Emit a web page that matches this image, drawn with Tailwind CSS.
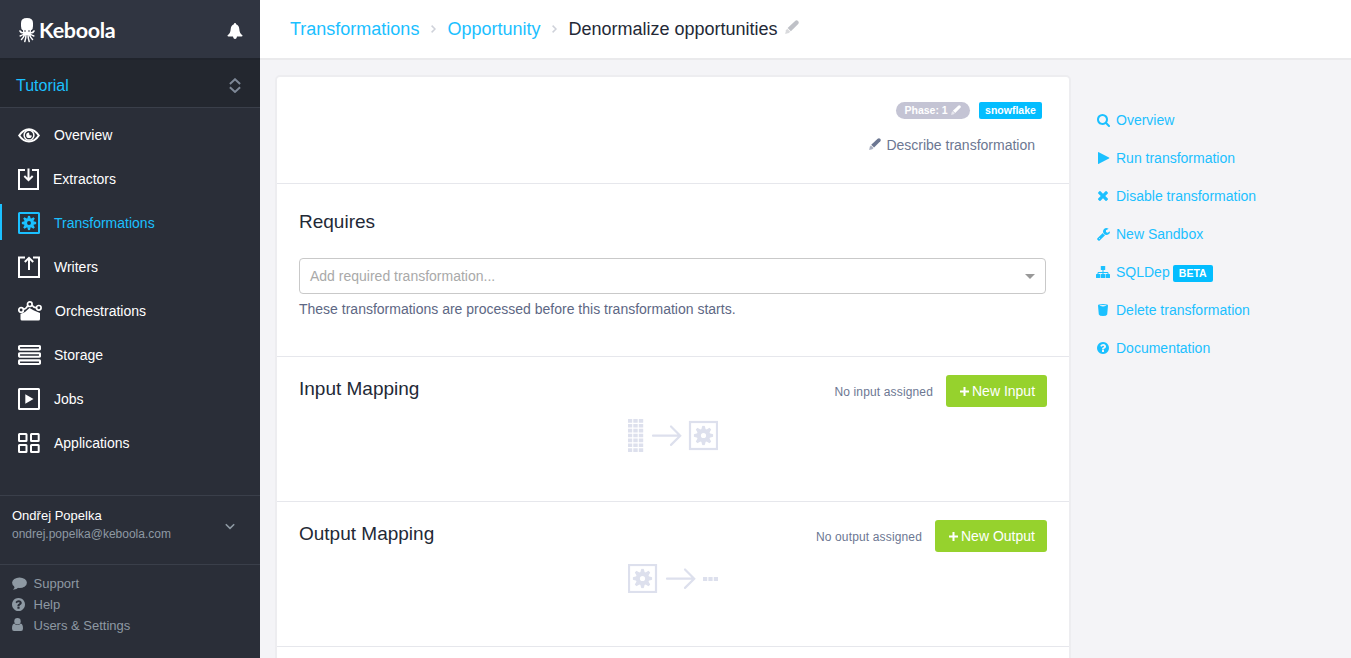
<!DOCTYPE html>
<html lang="en">
<head>
<meta charset="utf-8">
<title>Keboola - Denormalize opportunities</title>
<script src="https://cdn.jsdelivr.net/npm/@tailwindcss/browser@4"></script>
</head>
<body class="flex h-[658px] overflow-hidden bg-[#f4f4f7] font-['Liberation_Sans',Arial,sans-serif] text-sm text-[#5d6784]">

<svg class="hidden">
  <symbol id="gear" viewBox="-10 -10 20 20">
    <circle r="4.7" fill="none" stroke="currentColor" stroke-width="4.2"/>
    <g fill="currentColor">
      <path id="tooth" d="M-2.2-6L-1.2-9.7H1.2L2.2-6Z"/>
      <use href="#tooth" transform="rotate(45)"/><use href="#tooth" transform="rotate(90)"/>
      <use href="#tooth" transform="rotate(135)"/><use href="#tooth" transform="rotate(180)"/>
      <use href="#tooth" transform="rotate(225)"/><use href="#tooth" transform="rotate(270)"/>
      <use href="#tooth" transform="rotate(315)"/>
    </g>
  </symbol>
  <symbol id="pencil" viewBox="0 0 14 14">
    <path fill="currentColor" d="M10.1.9Q11.600-.5 13 .9T13.200 3.900L5.900 11.200 2.600 8Z"/>
    <path fill="currentColor" opacity=".6" d="M2.200 8.700L5.300 11.700 3.800 13 .2 13.900 1 10.200Z"/>
  </symbol>
  <symbol id="help" viewBox="128 128 1536 1536">
    <path fill="currentColor" d="M1024 1376v-192q0-14-9-23t-23-9h-192q-14 0-23 9t-9 23v192q0 14 9 23t23 9h192q14 0 23-9t9-23zm256-672q0-88-55.500-163t-138.500-116-170-41q-243 0-371 213-15 24 8 42l132 100q7 6 19 6 16 0 25-12 53-68 86-92 34-24 86-24 48 0 85.500 26t37.500 59q0 38-20 61t-68 45q-63 28-115.500 86.500t-52.500 125.500v36q0 14 9 23t23 9h192q14 0 23-9t9-23q0-19 21.500-49.500t54.500-49.500q32-18 49-28.500t46-35 44.500-48 28-60.500 12.500-81zm384 192q0 209-103 385.500t-279.500 279.500-385.500 103-385.500-103-279.500-279.500-103-385.500 103-385.500 279.500-279.500 385.500-103 385.500 103 279.500 279.500 103 385.500z"/>
  </symbol>
</svg>

<aside class="flex w-[260px] shrink-0 flex-col bg-[#2a2e38]">
  <div class="flex h-[60px] items-center border-b-2 border-[#20242c] bg-[#303541] pl-[19px] pr-[17px] pt-[3px] text-white">
    <svg class="h-[25px] w-[16px]" viewBox="0 0 16 25">
      <path fill="#fff" d="M2 5Q2 0 8 0T14 5V8Q14 11 12.500 12H3.500Q2 11 2 8Z"/>
      <path fill="#fff" d="M3.800 11H12.200L11.500 17H4.500Z"/>
      <circle cx="6" cy="13" r=".8" fill="#303541"/><circle cx="10" cy="13" r=".8" fill="#303541"/>
      <g fill="none" stroke="#fff" stroke-width="1.500" stroke-linecap="round">
        <path d="M4.800 14.500Q2.500 15.500 1 13M11.200 14.500Q13.500 15.500 15 13M5 16Q3.500 17 1.200 18M11 16Q12.500 17 14.800 18M5.500 16.500Q5 19 2.500 21.500M10.500 16.500Q11 19 13.500 21.500M7 16.500Q7 20 5.800 23.500M9 16.500Q9 20 10.200 23.500"/>
      </g>
    </svg>
    <span class="ml-[4px] font-['Lato',sans-serif] text-[21.500px] leading-none font-bold tracking-[-0.300px]">Keboola</span>
    <svg class="ml-auto h-[16px] w-[16px]" viewBox="0 0 16 16" fill="#fff">
      <path d="M8 0Q9.100 0 9.100 1.300Q12 2.200 12.300 6Q12.500 10.500 15.600 12.500Q15.400 13.500 14.500 13.500H1.500Q.6 13.500 .4 12.500Q3.500 10.500 3.700 6Q4 2.200 6.900 1.300Q6.900 0 8 0Z"/><path d="M6 13H10Q9.800 16 8 16T6 13Z"/>
    </svg>
  </div>
  <div class="flex h-[48px] items-center border-b border-[#3a3f4a] bg-[#23272f] pl-[16px] pr-[19px] pt-[4px] text-base text-[#1bc0ff]">
    Tutorial
    <svg class="ml-auto h-[15px] w-[12px]" viewBox="0 0 12 15" fill="none" stroke="#7e8897" stroke-width="1.900"><path d="M.9 6L6 1.200 11.100 6M.9 9.200L6 14 11.100 9.200"/></svg>
  </div>

  <nav class="flex h-[388px] flex-col border-b border-[#3a3f4a] pt-[5px] text-white">
    <a class="flex h-[44px] items-center pl-[18px]">
      <svg class="h-[22px] w-[22px]" viewBox="0 0 22 22" fill="none" stroke="currentColor" stroke-width="2"><path d="M1.200 11.500C4 7.200 7 5.200 11 5.200S18 7.200 20.800 11.500C18 15.700 15 17.500 11 17.500S4 15.700 1.200 11.500Z"/><circle cx="11" cy="11.200" r="4.900" stroke-width="1.500"/><path d="M11 8.500A2.800 2.800 0 1 0 13.800 11.500L11.500 11.300Z" fill="currentColor" stroke="none"/></svg>
      <span class="ml-[14px]">Overview</span>
    </a>
    <a class="flex h-[44px] items-center pl-[18px]">
      <svg class="h-[22px] w-[21px]" viewBox="0 0 21 22" fill="none" stroke="currentColor" stroke-width="2"><path d="M7 2H1V21H20V2H14"/><path d="M10.500 .5V12M6.300 8L10.500 12.200 14.700 8"/></svg>
      <span class="ml-[14px]">Extractors</span>
    </a>
    <a class="flex h-[44px] items-center text-[#1bc0ff]">
      <span class="mb-[2px] mr-[16px] h-[36px] w-[2px] bg-[#1bc0ff]"></span>
      <svg class="h-[22px] w-[22px]" viewBox="0 0 22 22"><rect x="1" y="1" width="20" height="20" rx=".5" fill="none" stroke="currentColor" stroke-width="2"/><use href="#gear" x="3.500" y="3.500" width="15" height="15"/></svg>
      <span class="ml-[14px]">Transformations</span>
    </a>
    <a class="flex h-[44px] items-center pl-[18px]">
      <svg class="h-[22px] w-[22px]" viewBox="0 0 22 22" fill="none" stroke="currentColor" stroke-width="2"><path d="M7 1.500H1V21H21V1.500H15"/><path d="M11 14V2M6.800 6L11 1.800 15.200 6"/></svg>
      <span class="ml-[14px]">Writers</span>
    </a>
    <a class="flex h-[44px] items-center pl-[18px]">
      <svg class="h-[22px] w-[24px]" viewBox="0 0 24 22"><path fill="currentColor" d="M2.500 14L7 12 11.500 8 16 10.500 22 13V19Q22 20.500 20.500 20.500H4Q2.500 20.500 2.500 19Z"/><g fill="none" stroke="currentColor" stroke-width="1.700"><path d="M5.400 9.200Q8 9 9.700 5.800M14 5.200Q16 8 18.500 7.600"/><g fill="#2a2e38"><circle cx="3.100" cy="10" r="2.300"/><circle cx="11.800" cy="4.200" r="2.300"/><circle cx="20.800" cy="7.800" r="2.300"/></g></g></svg>
      <span class="ml-[13px]">Orchestrations</span>
    </a>
    <a class="flex h-[44px] items-center pl-[18px]">
      <svg class="h-[22px] w-[23px]" viewBox="0 0 23 22" fill="none" stroke="currentColor" stroke-width="2.100"><rect x="1" y="2" width="21" height="3.600" rx="1"/><rect x="1" y="9.200" width="21" height="3.600" rx="1"/><rect x="1" y="16.400" width="21" height="3.600" rx="1"/></svg>
      <span class="ml-[13px]">Storage</span>
    </a>
    <a class="flex h-[44px] items-center pl-[18px]">
      <svg class="h-[22px] w-[22px]" viewBox="0 0 22 22"><rect x="1" y="1" width="20" height="20" rx=".5" fill="none" stroke="currentColor" stroke-width="2"/><path fill="currentColor" d="M7.300 6.300L15.500 11 7.300 15.700Z"/></svg>
      <span class="ml-[14px]">Jobs</span>
    </a>
    <a class="flex h-[44px] items-center pl-[18px]">
      <svg class="h-[22px] w-[22px]" viewBox="0 0 22 22" fill="none" stroke="currentColor" stroke-width="2"><rect x="1" y="2" width="7.500" height="7" rx=".5"/><rect x="13" y="2" width="7.700" height="7" rx=".5"/><rect x="1" y="13" width="7.500" height="7" rx=".5"/><rect x="13" y="13" width="7.700" height="7" rx=".5"/></svg>
      <span class="ml-[14px]">Applications</span>
    </a>
  </nav>

  <div class="flex h-[69px] justify-between border-b border-[#3a3f4a] pl-[12px] pr-[25px] pt-[10px]">
    <div>
      <div class="text-[13px] leading-[19px] text-white">Ondřej Popelka</div>
      <div class="text-xs leading-[18px] text-[#8e99a3]">ondrej.popelka@keboola.com</div>
    </div>
    <svg class="mt-[17px] h-[7px] w-[10px]" viewBox="0 0 10 7" fill="none" stroke="#8e99a3" stroke-width="1.600"><path d="M.8 1.200L5 5.400 9.200 1.200"/></svg>
  </div>
  <div class="flex flex-col pl-[12px] pt-[8px] text-[13px] leading-[21px] text-[#8e99a3]">
    <a class="flex items-center"><svg class="mr-[6.500px] h-[13px] w-[15px]" viewBox="0 0 15 13" fill="currentColor"><ellipse cx="7.500" cy="5.800" rx="7.400" ry="5.300"/><path d="M2.500 8Q3 11.500 1 12.800Q5 12.500 6.500 10.500Z"/></svg>Support</a>
    <a class="flex items-center"><svg class="mb-px mr-[8.500px] h-[13px] w-[13px]"><use href="#help"/></svg>Help</a>
    <a class="flex items-center"><svg class="mb-[2px] mr-[10.500px] h-[13px] w-[11px]" viewBox="0 0 11 13" fill="currentColor"><circle cx="5.500" cy="3.200" r="3.200"/><path d="M2.300 5.500Q5.500 8.500 8.700 5.500Q11 6 11 10.500Q11 13 9 13H2Q0 13 0 10.500Q0 6 2.300 5.500Z"/></svg>Users &amp; Settings</a>
  </div>
</aside>

<div class="flex min-w-0 flex-1 flex-col">
  <header class="flex h-[60px] shrink-0 items-center border-b-2 border-[#eaeaec] bg-white pl-[30px] text-lg leading-[58px] text-[#1bc0ff]">
    <a>Transformations</a>
    <svg class="mx-[11.500px] h-[8px] w-[5px]" viewBox="0 0 5 8" fill="none" stroke="#cfd2da" stroke-width="1.500"><path d="M.6 .6L4 4 .6 7.400"/></svg>
    <a>Opportunity</a>
    <svg class="ml-[12px] mr-[11px] h-[8px] w-[5px]" viewBox="0 0 5 8" fill="none" stroke="#cfd2da" stroke-width="1.500"><path d="M.6 .6L4 4 .6 7.400"/></svg>
    <span class="text-[#232936]">Denormalize opportunities</span>
    <svg class="mb-[4px] ml-[7px] h-[14px] w-[14px] text-[#bfc1c7]"><use href="#pencil"/></svg>
  </header>

  <div class="flex h-[598px] overflow-hidden">
    <main class="ml-[15px] mt-[15px] h-[620px] w-[796px] shrink-0 rounded-[5px] border-2 border-[#ededf0] bg-white">
      <section class="flex h-[107px] flex-col items-end border-b border-[#e6e7ec] pr-[27px] pt-[25px]">
        <div class="flex gap-[9px] text-[10.500px] leading-[17px] font-bold text-white">
          <span class="flex h-[17px] w-[74px] items-center rounded-full bg-[#c4c4d4] pl-[8.500px]">Phase: 1<svg class="mb-[2px] ml-[3.500px] h-[10px] w-[10px]"><use href="#pencil"/></svg></span>
          <span class="h-[17px] w-[63px] rounded-[2px] bg-[#03bdff] text-center">snowflake</span>
        </div>
        <a class="mr-[7px] mt-[16px] flex items-center leading-5 text-[#6c7792]"><svg class="mb-[3px] mr-[5px] h-[12px] w-[12px]"><use href="#pencil"/></svg>Describe transformation</a>
      </section>

      <section class="h-[173px] border-b border-[#e6e7ec] px-[22px] pt-[25px]">
        <h2 class="text-[19px] leading-[26px] text-[#232936]">Requires</h2>
        <div class="mt-[23px] flex h-[36px] w-[747px] items-center justify-between rounded border border-[#c9c9c9] pl-[10px] pr-[10px] text-[#a9a9a9]">
          <span>Add required transformation...</span>
          <svg class="h-[5px] w-[10px]" viewBox="0 0 10 5"><path fill="#999" d="M0 0H10L5 5Z"/></svg>
        </div>
        <p class="mt-[5px] leading-5">These transformations are processed before this transformation starts.</p>
      </section>

      <section class="flex h-[145px] flex-col items-center border-b border-[#e6e7ec] px-[22px] pt-[18px]">
        <div class="flex h-[32px] w-full items-center">
          <h2 class="mb-[5px] mr-auto text-[19px] leading-[26px] text-[#232936]">Input Mapping</h2>
          <span class="mr-[13px] mt-px text-xs tracking-[0.150px] text-[#6c7792]">No input assigned</span>
          <button class="flex h-[32px] w-[101px] items-center rounded-[3px] bg-[#96d22d] pl-[14px] text-white"><svg class="mr-[3px] h-[9px] w-[9px]" viewBox="0 0 9 9"><path d="M4.500 0V9M0 4.500H9" stroke="#fff" stroke-width="2"/></svg>New Input</button>
        </div>
        <svg class="mt-[12px] h-[33px] w-[90px] text-[#dde0ed]" viewBox="0 0 90 33">
          <path d="M2 0V33M7.500 0V33M13 0V33" stroke="currentColor" stroke-width="4.400" stroke-dasharray="3.700 1.180"/>
          <path d="M25 16.700H52M43 7.500L52.200 16.700 43 25.900" fill="none" stroke="currentColor" stroke-width="2.200" stroke-linecap="round"/>
          <rect x="62" y="3" width="27" height="27" fill="none" stroke="currentColor" stroke-width="2.200"/>
          <use href="#gear" x="65.500" y="6.500" width="20" height="20"/>
        </svg>
      </section>

      <section class="flex h-[145px] flex-col items-center border-b border-[#e6e7ec] px-[22px] pt-[18px]">
        <div class="flex h-[32px] w-full items-center">
          <h2 class="mb-[5px] mr-auto text-[19px] leading-[26px] text-[#232936]">Output Mapping</h2>
          <span class="mr-[13px] mt-px text-xs tracking-[0.150px] text-[#6c7792]">No output assigned</span>
          <button class="flex h-[32px] w-[112px] items-center rounded-[3px] bg-[#96d22d] pl-[14px] text-white"><svg class="mr-[3px] h-[9px] w-[9px]" viewBox="0 0 9 9"><path d="M4.500 0V9M0 4.500H9" stroke="#fff" stroke-width="2"/></svg>New Output</button>
        </div>
        <svg class="mt-[12px] h-[29px] w-[90px] text-[#dde0ed]" viewBox="0 0 90 29">
          <rect x="1" y="1" width="27" height="27" fill="none" stroke="currentColor" stroke-width="2.200"/>
          <use href="#gear" x="4.500" y="4.500" width="20" height="20"/>
          <path d="M39 14.700H66M57 5.500L66.200 14.700 57 23.900" fill="none" stroke="currentColor" stroke-width="2.200" stroke-linecap="round"/>
          <path d="M75 15H90" stroke="currentColor" stroke-width="4" stroke-dasharray="4.200 1.200"/>
        </svg>
      </section>
    </main>

    <aside class="ml-[25px] flex flex-col pt-[41px] text-[#1bc0ff]">
      <a class="flex h-[38px] items-center"><span class="flex w-[20px] shrink-0 pl-[.5px]"><svg class="h-[13px] w-[13px]" viewBox="64 128 1664 1664"><path fill="currentColor" d="M1216 832q0-185-131.500-316.500t-316.500-131.500-316.500 131.500-131.500 316.500 131.500 316.500 316.500 131.500 316.500-131.500 131.500-316.500zm512 832q0 52-38 90t-90 38q-54 0-90-38l-343-342q-179 124-399 124-143 0-273.500-55.500t-225-150-150-225-55.500-273.500 55.500-273.500 150-225 225-150 273.500-55.500 273.500 55.500 225 150 150 225 55.500 273.500q0 220-124 399l343 343q37 37 37 90z"/></svg></span>Overview</a>
      <a class="flex h-[38px] items-center"><span class="flex w-[20px] shrink-0 pl-[1.500px]"><svg class="h-[12px] w-[12px]" viewBox="0 0 12 12"><path fill="currentColor" d="M0 .6Q0-.2 .8 .2L11 5.600Q11.600 6 11 6.400L.8 11.800Q0 12.200 0 11.400Z"/></svg></span>Run transformation</a>
      <a class="flex h-[38px] items-center"><span class="flex w-[20px] shrink-0 pl-[2px]"><svg class="h-[10px] w-[10px]" viewBox="302 444 1188 1188"><path transform="translate(0 84)" fill="currentColor" d="M1490 1322q0 40-28 68l-136 136q-28 28-68 28t-68-28l-294-294-294 294q-28 28-68 28t-68-28l-136-136q-28-28-28-68t28-68l294-294-294-294q-28-28-28-68t28-68l136-136q28-28 68-28t68 28l294 294 294-294q28-28 68-28t68 28l136 136q28 28 28 68t-28 68l-294 294 294 294q28 28 28 68z"/></svg></span>Disable transformation</a>
      <a class="flex h-[38px] items-center"><span class="flex w-[20px] shrink-0 pl-[.5px]"><svg class="h-[13px] w-[13px]" viewBox="64 128 1664 1664"><path fill="currentColor" d="M448 1472q0-26-19-45t-45-19-45 19-19 45 19 45 45 19 45-19 19-45zm644-420l-682 682q-37 37-90 37-52 0-91-37l-106-108q-38-36-38-90 0-53 38-91l681-681q39 98 114.500 173.500t173.500 114.500zm634-435q0 39-23 106-47 134-164.500 217.500t-258.500 83.500q-185 0-316.500-131.500t-131.500-316.500 131.500-316.500 316.500-131.500q58 0 121.500 16.500t107.500 46.500q16 11 16 28t-16 28l-293 169v224l193 107q5-3 79-48.500t135.500-81 70.500-35.500q15 0 23.500 10t8.500 25z"/></svg></span>New Sandbox</a>
      <a class="flex h-[38px] items-center"><span class="flex w-[20px] shrink-0"><svg class="h-[12px] w-[14px]" viewBox="0 0 14 12"><g fill="currentColor"><rect x="4.800" width="4.400" height="4" rx=".6"/><rect y="8" width="4.300" height="4" rx=".6"/><rect x="4.800" y="8" width="4.400" height="4" rx=".6"/><rect x="9.700" y="8" width="4.300" height="4" rx=".6"/></g><path fill="none" stroke="currentColor" d="M7 3V9M2 9V6.500H12V9"/></svg></span>SQLDep<span class="ml-[3px] mt-[2px] h-[17px] w-[40px] rounded-[2px] bg-[#03bdff] text-center text-[10.500px] leading-[17px] font-bold text-white">BETA</span></a>
      <a class="flex h-[38px] items-center"><span class="flex w-[20px] shrink-0 pl-[2px]"><svg class="h-[12px] w-[10px]" viewBox="0 0 10 12"><path fill="currentColor" fill-rule="evenodd" d="M0 1.500Q0 0 5 0T10 1.500L9.200 10.500Q8.500 12 5 12T.8 10.500ZM1.300 1.600Q2 2.400 5 2.400T8.700 1.600Q8 .9 5 .9T1.300 1.600Z"/></svg></span>Delete transformation</a>
      <a class="flex h-[38px] items-center"><span class="flex w-[20px] shrink-0 pl-px"><svg class="h-[12px] w-[12px]"><use href="#help"/></svg></span>Documentation</a>
    </aside>
  </div>
</div>
</body>
</html>
